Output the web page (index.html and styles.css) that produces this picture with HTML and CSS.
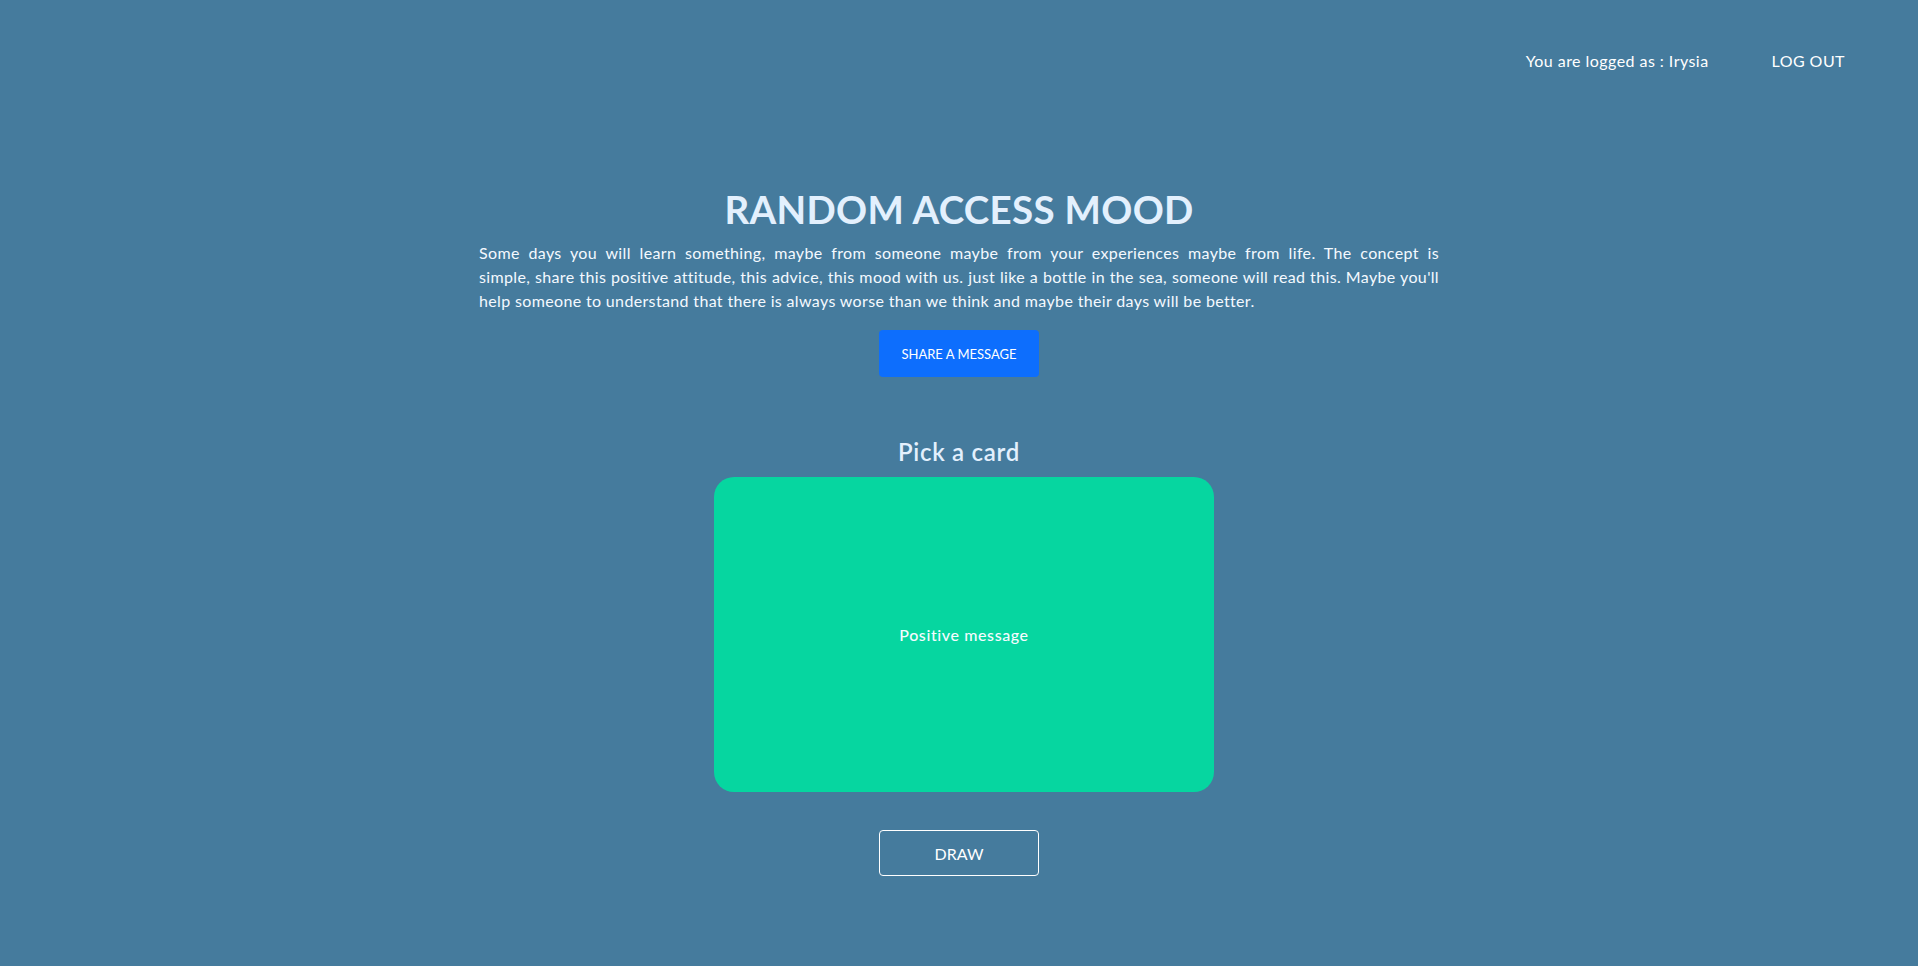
FILE: index.html
```html
<!DOCTYPE html>
<html lang="en">
<head>
<meta charset="utf-8">
<title>Random Access Mood</title>
<link rel="stylesheet" href="styles.css">
</head>
<body>
<header class="topbar">
  <span class="user">You are logged as : Irysia</span>
  <a class="logout" href="#">LOG OUT</a>
</header>
<main class="main">
  <section class="intro">
    <h1 class="title">RANDOM ACCESS MOOD</h1>
    <p class="desc"><span class="line">Some days you will learn something, maybe from someone maybe from your experiences maybe from life. The concept is</span> <span class="line">simple, share this positive attitude, this advice, this mood with us. just like a bottle in the sea, someone will read this. Maybe you'll</span> <span class="line last">help someone to understand that there is always worse than we think and maybe their days will be better.</span></p>
    <button class="share">SHARE A MESSAGE</button>
  </section>
  <section class="pick">
    <h2 class="pick-title">Pick a card</h2>
    <div class="card">Positive message</div>
    <button class="draw">DRAW</button>
  </section>
</main>
</body>
</html>
```
FILE: styles.css
```css
html, body {
  margin: 0;
  padding: 0;
}
body {
  background: #457b9d;
  font-family: Lato, "Open Sans", sans-serif;
  color: #ffffff;
  min-height: 966px;
  letter-spacing: 0.45px;
}
.topbar {
  display: flex;
  justify-content: flex-end;
  align-items: center;
  gap: 63px;
  padding: 49px 73px 0 0;
  height: 22px;
  font-size: 16px;
}
.logout {
  color: #ffffff;
  text-decoration: none;
}
.main {
  display: flex;
  flex-direction: column;
  align-items: center;
}
.intro {
  width: 960px;
  display: flex;
  flex-direction: column;
  align-items: center;
  margin-top: 113px;
}
.title {
  margin: 0;
  font-size: 38.5px;
  line-height: 50px;
  font-weight: 700;
  letter-spacing: 0.3px;
  color: #e3f0fd;
}
.desc {
  margin: 7px 0 0;
  width: 100%;
  font-size: 16px;
  line-height: 24px;
  letter-spacing: 0.35px;
  color: #f4f9ff;
}
.line {
  display: block;
  text-align: justify;
  text-align-last: justify;
  white-space: nowrap;
}
.line.last {
  text-align: left;
  text-align-last: left;
}
.share {
  margin-top: 17px;
  width: 160px;
  height: 47px;
  border: none;
  border-radius: 4px;
  background: #0d6efd;
  color: #ffffff;
  font-family: inherit;
  font-size: 13px;
  cursor: pointer;
}
.pick {
  display: flex;
  flex-direction: column;
  align-items: center;
  margin-top: 60px;
}
.pick-title {
  margin: 0;
  font-size: 24px;
  line-height: 30px;
  font-weight: 600;
  letter-spacing: 0.7px;
  color: #e3f0fd;
}
.card {
  margin: 10px 0 0 10px;
  width: 500px;
  height: 315px;
  border-radius: 20px;
  background: #06d6a0;
  display: flex;
  align-items: center;
  justify-content: center;
  font-size: 16px;
  font-weight: 500;
  letter-spacing: 0.6px;
  color: #f4fbff;
}
.draw {
  margin-top: 38px;
  width: 160px;
  height: 46px;
  border: 1px solid #ffffff;
  border-radius: 4px;
  background: transparent;
  color: #ffffff;
  font-family: inherit;
  font-size: 16px;
  cursor: pointer;
}
```
